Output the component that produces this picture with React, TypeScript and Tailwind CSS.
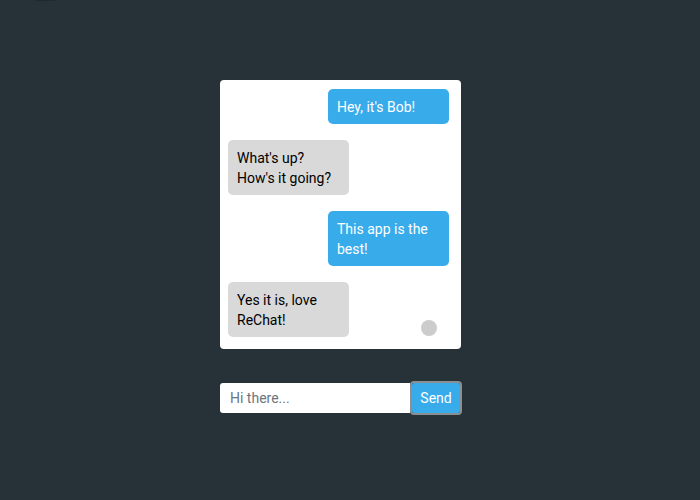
const messages = [
  { text: "Hey, it's Bob!", mine: true },
  { text: "What's up? How's it going?", mine: false },
  { text: "This app is the best!", mine: true },
  { text: "Yes it is, love ReChat!", mine: false },
]

function Bubble({ text, mine }: { text: string; mine: boolean }) {
  return (
    <div className={`flex ${mine ? "justify-end pr-[12px]" : "justify-start pl-[8px]"}`}>
      <div
        className={`w-[121px] rounded-[5px] px-[9px] py-[7.5px] text-[14px] leading-[20px] ${
          mine ? "bg-[#38abeb] text-white" : "bg-[#d9d9d9] text-black"
        }`}
      >
        {text}
      </div>
    </div>
  )
}

export default function App() {
  return (
    <div className="relative min-h-[500px] w-full bg-[#263238] font-['Roboto','Liberation_Sans',Arial,sans-serif]">
      <div className="absolute left-[35px] top-0 h-px w-[20px] bg-[#1c292e]" />
      <div className="pl-[220px] pt-[80px]">
        <div className="relative flex w-[241px] flex-col gap-[16px] rounded-[4px] bg-white pt-[9px] pb-[12px]">
          {messages.map((m, i) => (
            <Bubble key={i} text={m.text} mine={m.mine} />
          ))}
          <div className="absolute left-[201px] top-[240px] h-[16px] w-[16px] rounded-full bg-[#cccccc]" />
        </div>
        <div className="mt-[32px] flex w-[243px] items-center">
          <input
            className="h-[30px] w-[190px] rounded-l-[3px] bg-white px-[10px] text-[14px] text-black outline-none placeholder:text-[#6c757d]"
            placeholder="Hi there..."
          />
          <div className="rounded-[4px] border-2 border-[#8a8f92] bg-[#263238]">
            <button className="h-[30px] w-[48px] rounded-[2px] bg-[#38abeb] text-[14px] text-white">Send</button>
          </div>
        </div>
      </div>
    </div>
  )
}
